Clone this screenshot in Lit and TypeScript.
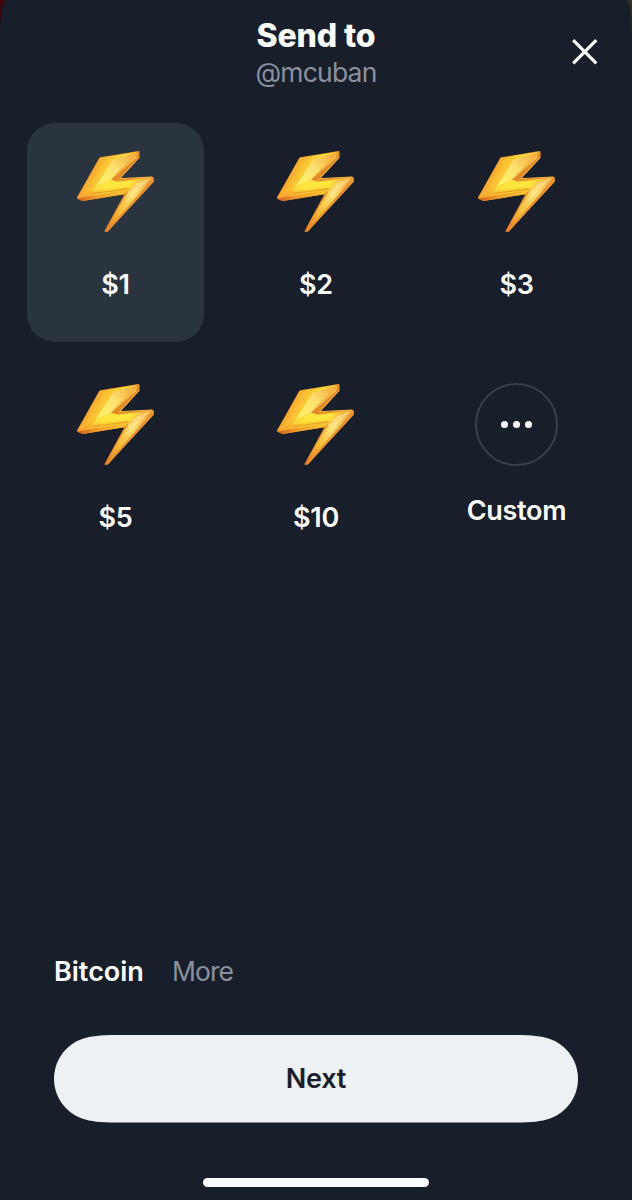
import { LitElement, html, css } from "lit";
import { customElement, property, state } from "lit/decorators.js";

@customElement("bolt-icon")
class BoltIcon extends LitElement {
  static styles = css`
    :host { display: block; width: 100px; height: 100px; }
    svg { display: block; width: 100%; height: 100%; }
  `;
  render() {
    return html`<svg viewBox="-1 0 300 300" aria-hidden="true">
      <defs>
        <linearGradient id="edge" x1="0" y1="0" x2="1" y2="1">
          <stop offset="0" stop-color="#f0a030" /><stop offset=".5" stop-color="#e8912a" /><stop offset="1" stop-color="#e07a28" />
        </linearGradient>
        <linearGradient id="face" gradientUnits="userSpaceOnUse" x1="55" y1="105" x2="120" y2="140">
          <stop offset="0" stop-color="#f29a2c" /><stop offset=".5" stop-color="#fbc234" /><stop offset="1" stop-color="#fcdc38" />
        </linearGradient>
        <linearGradient id="shine" gradientUnits="userSpaceOnUse" x1="200" y1="40" x2="100" y2="138">
          <stop offset="0" stop-color="#f5ac40" /><stop offset=".5" stop-color="#fce070" /><stop offset="1" stop-color="#fff36a" />
        </linearGradient>
        <linearGradient id="tail" gradientUnits="userSpaceOnUse" x1="235" y1="120" x2="120" y2="270">
          <stop offset="0" stop-color="#f5b04a" /><stop offset=".3" stop-color="#fbdc70" /><stop offset=".65" stop-color="#f8bc36" /><stop offset="1" stop-color="#e87627" />
        </linearGradient>
        <linearGradient id="mid" gradientUnits="userSpaceOnUse" x1="40" y1="172" x2="250" y2="115">
          <stop offset="0" stop-color="#f3982c" /><stop offset=".35" stop-color="#fdd433" /><stop offset=".7" stop-color="#ffe23c" /><stop offset="1" stop-color="#f3a840" />
        </linearGradient>
        <linearGradient id="side" gradientUnits="userSpaceOnUse" x1="32" y1="180" x2="190" y2="150">
          <stop offset="0" stop-color="#d45f22" /><stop offset=".4" stop-color="#f0a02d" /><stop offset="1" stop-color="#fcc832" />
        </linearGradient>
      </defs>
      <path fill="url(#edge)" d="M98 55Q99 53 102 52L216 33Q219 33 219 36L219 53L160 117L260 110Q263 111 262 125L125 274Q120 277 114 274L174 163L49 183L33 176Q31 174 33 170Z" />
      <path fill="url(#face)" d="M101 54L212 36L133 119L155 126L192 151L42 174L35 172Z" />
      <path fill="url(#shine)" d="M139 59L212 37L133 119L88 140Z" />
      <path fill="url(#mid)" d="M88 140L133 119L151 125L258 112L194 145L40 173Z" />
      <path fill="#ffee48" opacity=".55" d="M88 140L133 120L154 126L205 123L180 137L78 154Z" />
      <path fill="url(#side)" d="M33 176L45 173L189 147L174 163L49 183Z" />
      <path fill="#d98421" opacity=".6" d="M85 158L187 143L182 149L75 163Z" />
      <path fill="url(#tail)" d="M257 113L211 127L187 152L115 274Q119 275 123 271L246 130Z" />
      <path fill="#fff2a0" opacity=".5" d="M251 115L211 130L195 157L178 190Z" />
      <path fill="#e89432" d="M262 111L262 125L125 274L118 275L248 131Z" />
      <path fill="#e08a2a" d="M219 34L219 53L160 117L148 121L136 118L209 54Z" />
      <path fill="#f8ba46" d="M214 38L209 55L136 118L148 102Z" />
      <path fill="none" stroke="#f5b844" stroke-width="3" d="M218 53L160 116L257 111" />
    </svg>`;
  }
}

@customElement("amount-tile")
class AmountTile extends LitElement {
  @property() label = "";
  @property({ type: Boolean }) custom = false;
  @property({ type: Boolean, reflect: true }) selected = false;

  static styles = css`
    :host { display: flex; flex-direction: column; align-items: center; box-sizing: border-box; height: 219px; padding-top: 17px; border-radius: 28px; cursor: pointer; }
    :host([selected]) { background: #2a343f; }
    .label { margin-top: 28px; font: 600 27px/34px Inter, sans-serif; letter-spacing: -0.3px; color: #fff; white-space: nowrap; }
    .ring { box-sizing: border-box; width: 83px; height: 83px; margin-top: 10px; border: 2px solid #39404b; border-radius: 50%; display: flex; align-items: center; justify-content: center; gap: 5px; }
    .dot { width: 7px; height: 7px; border-radius: 50%; background: #fff; }
  `;
  render() {
    return this.custom
      ? html`<div class="ring"><i class="dot"></i><i class="dot"></i><i class="dot"></i></div><span class="label">${this.label}</span>`
      : html`<bolt-icon></bolt-icon><span class="label">${this.label}</span>`;
  }
}

@customElement("app-root")
class AppRoot extends LitElement {
  @state() private chosen = "$1";
  private amounts = ["$1", "$2", "$3", "$5", "$10", "Custom"];

  static styles = css`
    :host { display: block; height: 1200px; background: linear-gradient(90deg, #3d0509 50%, #303026 50%); font-family: Inter, sans-serif; color: #fff; }
    .sheet { position: relative; height: 100%; box-sizing: border-box; display: flex; flex-direction: column; background: #181f2a; border-radius: 6px 6px 0 0 / 34px 34px 0 0; padding: 17px 27px 13px; }
    header { text-align: center; }
    h1 { margin: 0; font-size: 32px; line-height: 38px; font-weight: 800; letter-spacing: -0.1px; }
    .handle { font-size: 26.5px; line-height: 34px; letter-spacing: -0.8px; color: #8a909f; }
    .close { position: absolute; top: 38px; right: 33px; width: 28px; height: 28px; padding: 0; border: 0; background: none; }
    .close svg { display: block; }
    .grid { margin-top: 34px; display: grid; grid-template-columns: repeat(3, 177px); justify-content: space-between; row-gap: 14px; }
    .tabs { margin: auto 27px 0; display: flex; gap: 28px; font-size: 26.5px; line-height: 33px; letter-spacing: -0.9px; color: #8a909f; }
    .active { font-size: 27px; line-height: 34px; font-weight: 600; letter-spacing: 0; color: #fff; }
    .next { margin: 46px 27px 0; height: 88px; flex: none; padding: 0; border: 0; background: #edf1f3; color: #19202b; font: 600 27px/34px Inter, sans-serif; letter-spacing: -0.2px; clip-path: path("M0 43.75C0 25.5 12 9.5 28 4C37 1 46 0 62 0H462C478 0 487 1 496 4C512 9.5 524 25.5 524 43.75C524 62 512 78 496 83.5C487 86.5 478 87.5 462 87.5H62C46 87.5 37 86.5 28 83.5C12 78 0 62 0 43.75Z"); }
    .home { width: 226px; height: 9px; flex: none; margin: 55px auto 0; border-radius: 5px; background: #fff; }
  `;
  render() {
    return html`<main class="sheet">
      <header><h1>Send to</h1><div class="handle">@mcuban</div></header>
      <button class="close" aria-label="Close">
        <svg width="28" height="28" viewBox="0 0 28 28"><path d="M2.2 2.2L25.3 25.3M25.3 2.2L2.2 25.3" stroke="#fff" stroke-width="3.2" fill="none" /></svg>
      </button>
      <section class="grid">
        ${this.amounts.map(
          (a) => html`<amount-tile .label=${a} ?custom=${a === "Custom"} ?selected=${a === this.chosen} @click=${() => (this.chosen = a)}></amount-tile>`
        )}
      </section>
      <nav class="tabs"><span class="active">Bitcoin</span><span>More</span></nav>
      <button class="next">Next</button>
      <div class="home"></div>
    </main>`;
  }
}
